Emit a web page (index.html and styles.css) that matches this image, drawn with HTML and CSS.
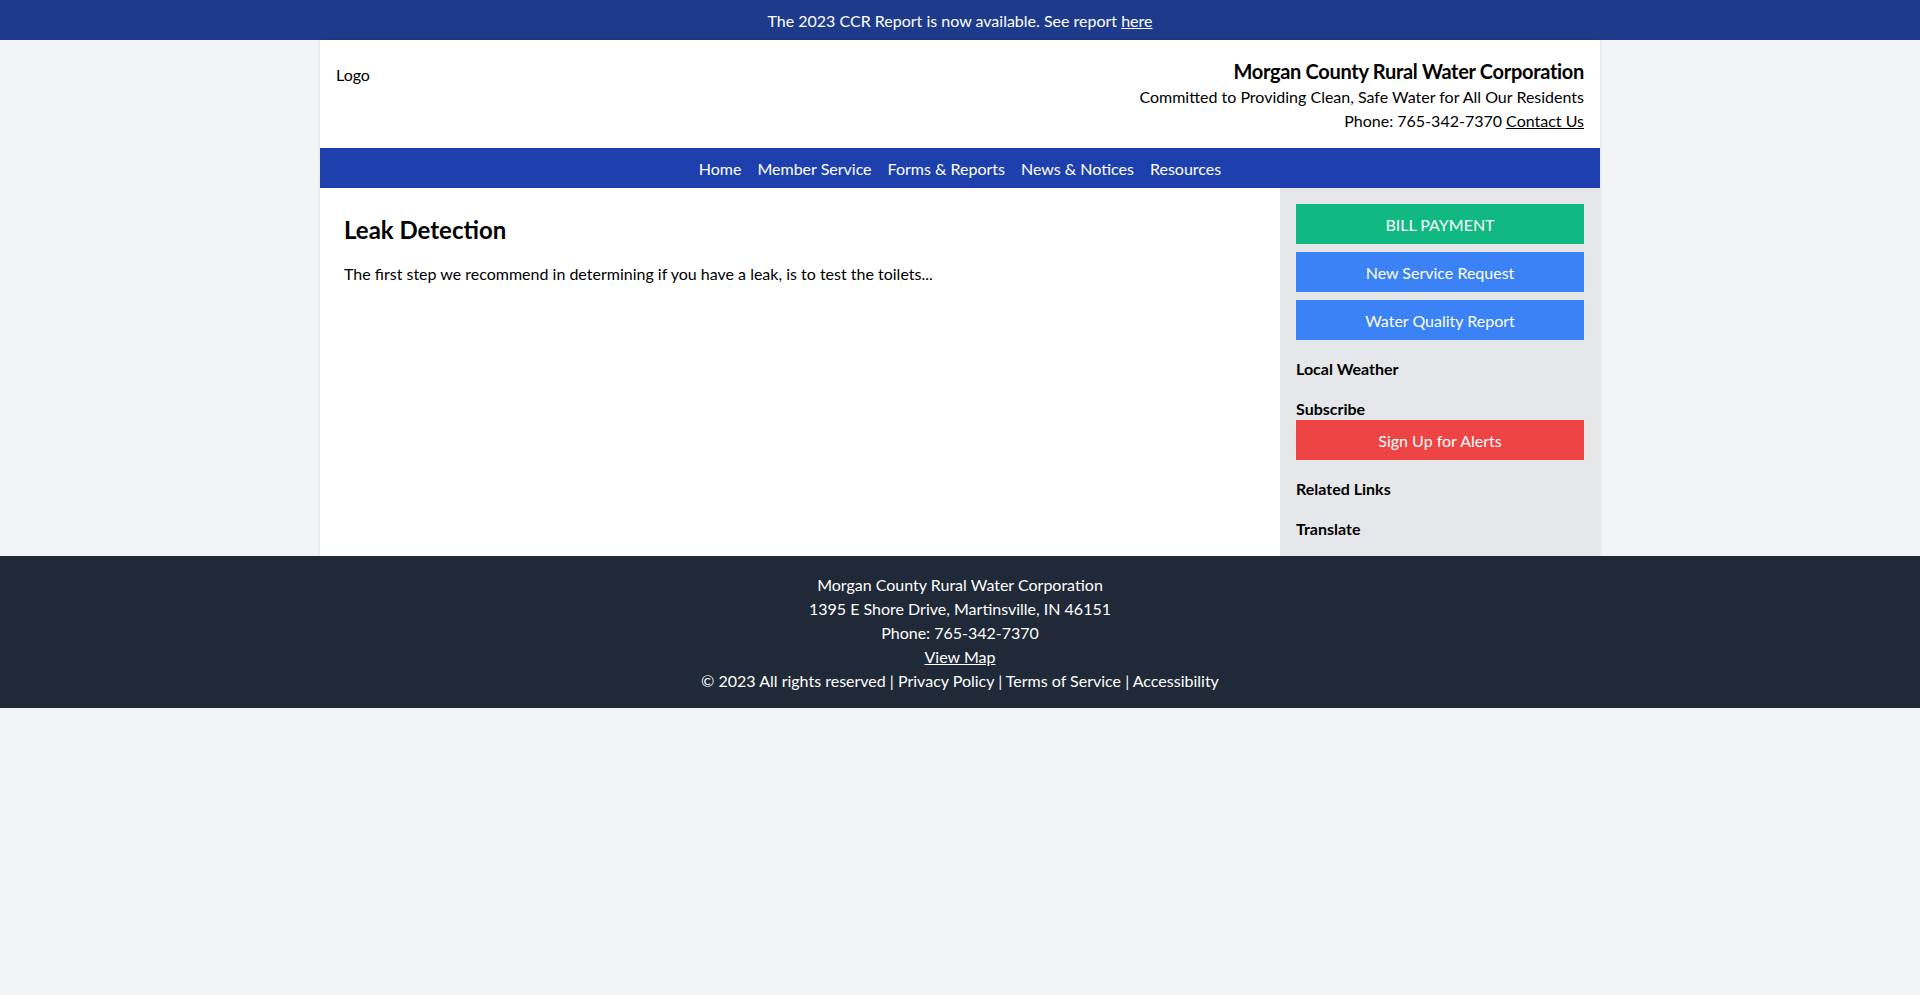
FILE: index.html
```html
<!DOCTYPE html>
<html lang="en">
<head>
<meta charset="utf-8">
<title>Morgan County Rural Water Corporation</title>
<link rel="stylesheet" href="styles.css">
</head>
<body>
<div class="banner">The 2023 CCR Report is now available. See report <a href="#">here</a></div>
<div class="page">
  <header class="header">
    <div class="logo">Logo</div>
    <div class="org">
      <div class="org-name">Morgan County Rural Water Corporation</div>
      <div class="org-line">Committed to Providing Clean, Safe Water for All Our Residents</div>
      <div class="org-line">Phone: 765-342-7370 <a href="#">Contact Us</a></div>
    </div>
  </header>
  <nav class="nav">
    <a href="#">Home</a>
    <a href="#">Member Service</a>
    <a href="#">Forms &amp; Reports</a>
    <a href="#">News &amp; Notices</a>
    <a href="#">Resources</a>
  </nav>
  <div class="body">
    <main class="content">
      <h1>Leak Detection</h1>
      <p>The first step we recommend in determining if you have a leak, is to test the toilets...</p>
    </main>
    <aside class="sidebar">
      <div class="buttons">
        <a class="btn btn-green" href="#">BILL PAYMENT</a>
        <a class="btn btn-blue" href="#">New Service Request</a>
        <a class="btn btn-blue" href="#">Water Quality Report</a>
      </div>
      <div class="section"><h3>Local Weather</h3></div>
      <div class="section">
        <h3>Subscribe</h3>
        <a class="btn btn-red" href="#">Sign Up for Alerts</a>
      </div>
      <div class="section"><h3>Related Links</h3></div>
      <div class="section"><h3>Translate</h3></div>
    </aside>
  </div>
</div>
<footer class="footer">
  <div>Morgan County Rural Water Corporation</div>
  <div>1395 E Shore Drive, Martinsville, IN 46151</div>
  <div>Phone: 765-342-7370</div>
  <div><a class="u" href="#">View Map</a></div>
  <div>© 2023 All rights reserved | <a href="#">Privacy Policy</a> | <a href="#">Terms of Service</a> | <a href="#">Accessibility</a></div>
</footer>
</body>
</html>
```
FILE: styles.css
```css
* { box-sizing: border-box; }
html, body { margin: 0; padding: 0; }
body {
  background: #f3f4f6;
  font-family: Lato, "Open Sans", sans-serif;
  font-size: 16px;
  line-height: 24px;
  color: #000;
}
a { color: inherit; }
.banner {
  background: #1e3a8a;
  color: #fff;
  text-align: center;
  padding: 9px 16px 7px;
}
.banner a { text-decoration: underline; }
.page {
  width: 1280px;
  margin: 0 auto;
  background: #fff;
  box-shadow: 0 0 3px rgba(0,0,0,0.12);
}
.header {
  display: flex;
  justify-content: space-between;
  align-items: flex-start;
  padding: 17px 16px 15px;
}
.logo { padding-top: 6px; }
.org { text-align: right; }
.org-name { font-size: 20px; line-height: 28px; font-weight: 700; letter-spacing: -0.3px; }
.org-line a { text-decoration: underline; }
.nav {
  background: #1e40af;
  display: flex;
  justify-content: center;
  gap: 16px;
  padding: 9px 16px 7px;
}
.nav a { color: #fff; text-decoration: none; }
.body { display: flex; }
.content { flex: 1; padding: 24px; }
.content h1 { margin: 0 0 15px; padding-top: 2px; font-size: 24px; line-height: 32px; font-weight: 700; }
.content p { margin: 0; padding-top: 1px; }
.sidebar {
  width: 320px;
  background: #e5e7eb;
  padding: 16px;
  display: flex;
  flex-direction: column;
  gap: 16px;
}
.buttons { display: flex; flex-direction: column; gap: 8px; }
.btn {
  display: block;
  text-align: center;
  color: #fff;
  text-decoration: none;
  padding: 9px 16px 7px;
}
.btn-green { background: #10b981; }
.btn-blue { background: #3b82f6; }
.btn-red { background: #ef4444; }
.section h3 { margin: 0; padding-top: 1px; margin-bottom: -1px; font-size: 16px; line-height: 24px; font-weight: 700; }
.footer {
  background: #1f2937;
  color: #fff;
  text-align: center;
  padding: 17px 16px 15px;
}
.footer a { text-decoration: none; }
.footer a.u { text-decoration: underline; }
```
